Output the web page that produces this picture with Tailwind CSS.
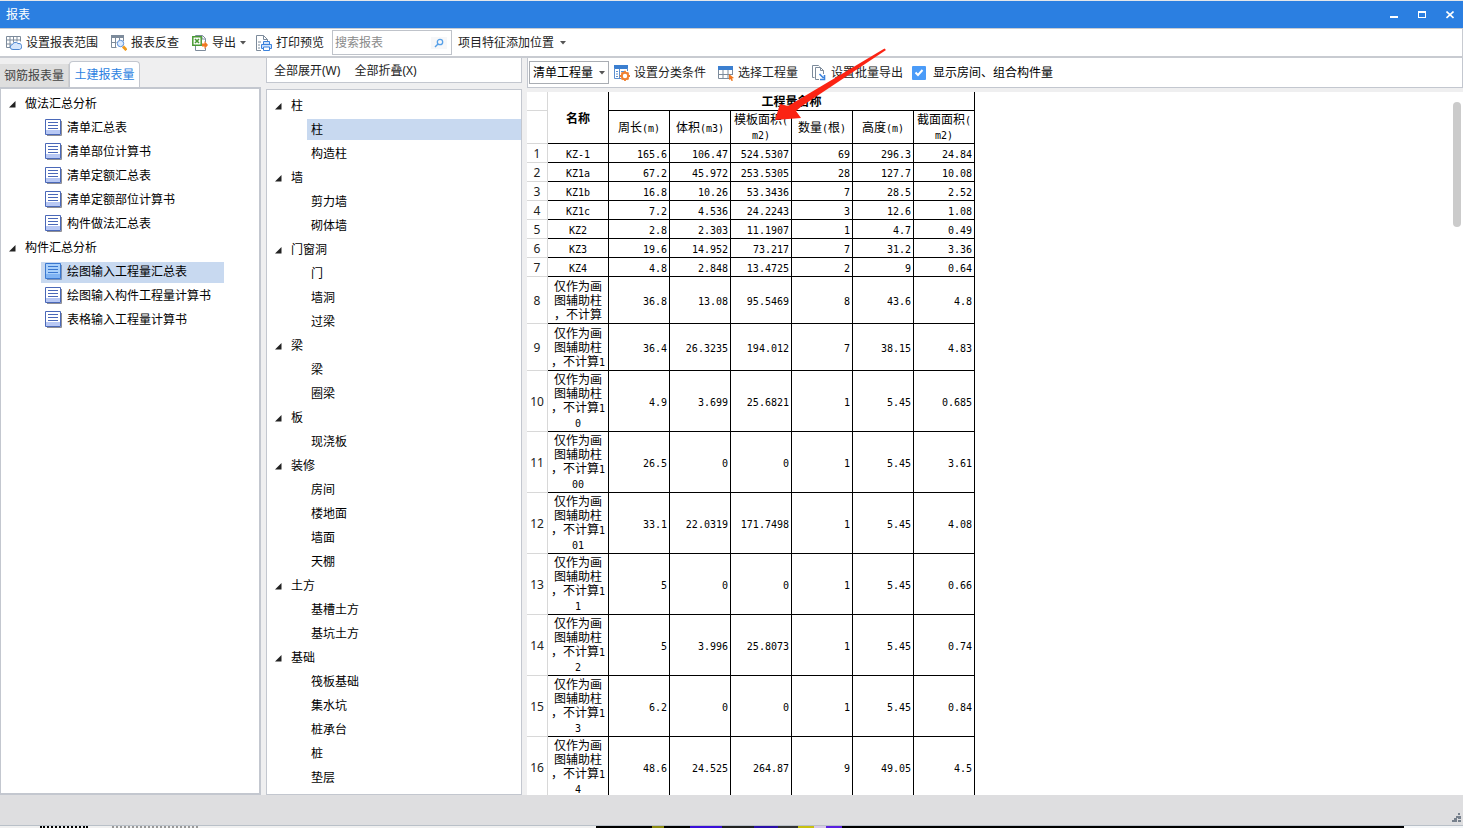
<!DOCTYPE html>
<html lang="zh-CN">
<head>
<meta charset="utf-8">
<title>报表</title>
<script src="https://cdn.jsdelivr.net/npm/@tailwindcss/browser@4"></script>
</head>
<body class="h-screen overflow-hidden flex flex-col bg-[#efeff0] text-xs text-black font-['Noto_Sans','Noto_Sans_CJK_SC',sans-serif]">
<svg class="hidden">
  <symbol id="doc" viewBox="0 0 17 17"><path d="M2 16.500h14.500V2" fill="none" stroke="#8f8f95"/><path d="M.5.5h15v15H.5z" fill="#fff" stroke="#4a68b8"/><path d="M1 11h14v4H1z" fill="#b8c8f4"/><path d="M3 3.500h10M3 6.500h10M3 9.500h10" stroke="#4a68b8"/></symbol>
  <symbol id="docsel" viewBox="0 0 17 17"><path d="M2 16.500h14.500V2" fill="none" stroke="#7d93b8"/><path d="M.5.5h15v15H.5z" fill="#a9d0fb" stroke="#3a78d0"/><path d="M1 11h14v4H1z" fill="#80b4f4"/><path d="M3 3.500h10M3 6.500h10M3 9.500h10" stroke="#3a78d0"/></symbol>
  <symbol id="tri" viewBox="0 0 7 7"><path d="M6.500 0v6.500H0z" fill="#222"/></symbol>
  <symbol id="down" viewBox="0 0 6 4"><path d="M0 0h6L3 3.500z" fill="#555"/></symbol>
</svg>

<header class="h-7 shrink-0 border-t border-[#e4e6ea] bg-[#2b7fe1] text-white flex items-center justify-between pl-1.5 pr-[9px]">
  <h1>报表</h1>
  <div class="flex items-center gap-5">
    <button aria-label="最小化"><svg class="w-2 h-2" viewBox="0 0 8 8"><path d="M0 5h8v2H0z" fill="#fff"/></svg></button>
    <button aria-label="最大化"><svg class="w-2 h-2" viewBox="0 0 8 8"><path d="M0 0h8v7H0zM1 2v4h6V2z" fill="#fff" fill-rule="evenodd"/></svg></button>
    <button aria-label="关闭"><svg class="w-2 h-2" viewBox="0 0 8 8"><path d="M.5.500l7 6.500M7.500.500l-7 6.500" stroke="#fff" stroke-width="1.600"/></svg></button>
  </div>
</header>

<nav class="h-[30px] shrink-0 bg-white border border-l-0 border-b-2 border-[#c8cbd1] flex items-center pl-1.5 text-[#222]">
  <button class="flex items-center gap-1 mr-[13px]"><svg class="w-4 h-4" viewBox="0 0 16 16" fill="none"><path d="M.5 1.500h14v5M.5 1.500v11h4M.5 5h14M.5 9h5M4 1.500v11M7.500 1.500v6M11 1.500v5" stroke="#7d8b9b"/><path d="M7 14.500a2.500 2.500 0 0 1-.5-5 3.200 3.200 0 0 1 5.500-1 3 3 0 0 1 1.500 6z" fill="#d5e6fc" stroke="#4b86d0"/></svg>设置报表范围</button>
  <button class="flex items-center gap-1 mr-[13px]"><svg class="w-4 h-4" viewBox="0 0 16 16" fill="none"><path d="M0 0h13v3H0z" fill="#7d8b9b"/><path d="M.5 1v11.500h5M12.500 3v3M.5 7.500h5M4.500 3v9M8.500 3v2" stroke="#7d8b9b"/><circle cx="9.500" cy="8.500" r="3.200" fill="#dcebff" stroke="#5b8fd8"/><path d="M12 11.500l3.500 3.500" stroke="#f09a1c" stroke-width="3"/></svg>报表反查</button>
  <button class="flex items-center gap-1 mr-2.5"><svg class="w-4 h-4" viewBox="0 0 16 16" fill="none"><path d="M3.500 2V.5h7l3 3V7M3.500 11v4.500h10V13M10 .5V4h3.500" stroke="#7d8b9b"/><path d="M.8 1.800h8.400v8.400H.8z" fill="#fff" stroke="#4a9a35" stroke-width="1.500"/><path d="M3 4l4 4M7 4l-4 4" stroke="#4a9a35" stroke-width="1.600"/><path d="M10 8.500h2.500V6L16 10l-3.500 4v-2.500H10z" fill="#f07820"/></svg>导出<svg class="w-1.5 h-1"><use href="#down"/></svg></button>
  <button class="flex items-center gap-1 mr-2"><svg class="w-4 h-4" viewBox="0 0 16 16" fill="none"><path d="M5 15.500H.5V.5h7l4 4V6M7.500.5v4h4" stroke="#7d8b9b"/><path d="M2 7h3M2 10h2M2 13h2" stroke="#7d8b9b"/><path d="M7.500 9V6.500h6V9M5.500 9.500h10v4h-10z" stroke="#3b82dc" fill="#cfe2fb"/><path d="M7.500 12h6v3.500h-6z" fill="#fff" stroke="#3b82dc"/></svg>打印预览</button>
  <label class="h-[25px] w-[120px] border border-[#bfc3ca] flex items-center justify-between pl-0.5 pr-1 bg-white"><input class="w-[90px] placeholder:text-[#8a8a8a] outline-none" placeholder="搜索报表" aria-label="搜索报表"><svg class="w-4 h-3 bg-[#f6f7f9]" viewBox="0 0 16 12" fill="none"><circle cx="9" cy="5" r="2.700" stroke="#56a0e8" stroke-width="1.300"/><path d="M7 7l-3 3" stroke="#56a0e8" stroke-width="1.500"/></svg></label>
  <button class="flex items-center gap-1.5 ml-1.5">项目特征添加位置<svg class="w-1.5 h-1"><use href="#down"/></svg></button>
</nav>

<main class="flex-1 min-h-0 flex">
  <section class="w-[261px] shrink-0 flex flex-col">
    <div class="h-[29px] shrink-0 flex items-end">
      <button class="h-[23px] w-[69px] bg-[#dedede] border-r border-[#cfcfcf] text-[#444]">钢筋报表量</button>
      <button class="h-[26px] w-[71px] rounded-t border border-b-0 border-[#c3c7cf] bg-white text-[#2b7fe1]">土建报表量</button>
    </div>
    <div id="left" class="flex-1 min-h-0 bg-white border-2 border-l border-[#c3c7cf] pt-[3px]"></div>
  </section>
  <section class="w-64 shrink-0 ml-[5px] flex flex-col">
    <div class="h-[25px] shrink-0 border border-t-0 border-[#c3c7cf] bg-white flex items-center gap-3.5 px-[7px] pt-0.5 text-[#222]"><button>全部展开(W)</button><button>全部折叠(X)</button></div>
    <div id="mid" class="flex-1 min-h-0 overflow-hidden mt-1.5 bg-white border border-[#c3c7cf] pt-[3px]"></div>
  </section>
  <section class="flex-1 min-w-0 ml-[5px] flex flex-col">
    <div class="h-[30px] shrink-0 border border-t-0 border-[#c3c7cf] bg-white flex items-center pl-px text-[#222]">
      <div class="relative flex items-center"><select aria-label="工程量类型" class="appearance-none h-[23px] w-20 pl-[3px] border border-[#a9adb3] bg-white text-black"><option>清单工程量</option></select><svg class="absolute right-1 w-1.5 h-1 pointer-events-none"><use href="#down"/></svg></div>
      <button class="flex items-center gap-1 ml-[5px] mr-3"><svg class="w-4 h-4" viewBox="0 0 16 16" fill="none"><path d="M0 0h14v4H0z" fill="#3b7fd0"/><path d="M.5 3v10.500H7M13.500 3v3M5.500 4v9M2 6.500h2M2 9h2M2 11.500h2M7 6.500h4" stroke="#5b8fd0"/><circle cx="11" cy="11" r="3.200" fill="#fff" stroke="#f08030" stroke-width="2"/><path d="M11 5.800v2M11 14v2M5.800 11h2M14 11h2M7.500 7.500l1 1M13.500 13.500l1 1M14.500 7.500l-1 1M8.500 13.500l-1 1" stroke="#f08030" stroke-width="1.800"/></svg>设置分类条件</button>
      <button class="flex items-center gap-1 mr-[13px]"><svg class="w-4 h-4" viewBox="0 0 16 16" fill="none"><path d="M0 1h15v4H0z" fill="#3b7fd0"/><path d="M.5 5v8.500H12M14.500 5v5M0 9.500h14M5 5v8.500M10 5v8.500" stroke="#7d8b9b"/><path d="M11 9l5 4-2 .5 1 2-1.500.5-1-2L11 15z" fill="#f07820"/></svg>选择工程量</button>
      <button class="flex items-center gap-1 mr-[9px]"><svg class="w-4 h-4" viewBox="0 0 16 16" fill="none"><path d="M3.500 12.500H1.500V.5h6l1 1M8 14.500H4.500v-12h5l3 3V9M9.500 2.500v3h3" stroke="#7d8b9b"/><path d="M8.500 9l4 4M13.500 10v4.500H9" stroke="#3b82dc" stroke-width="1.600"/></svg>设置批量导出</button>
      <label class="flex items-center gap-[7px] text-black"><span class="relative grid w-3.5 h-3.5"><input type="checkbox" checked class="appearance-none w-3.5 h-3.5 bg-[#4a9bf8] rounded-[1px]"><svg class="absolute inset-0 w-3.5 h-3.5 pointer-events-none" viewBox="0 0 14 14"><path d="M3.500 6.500L6 9l4.500-5" fill="none" stroke="#fff" stroke-width="2"/></svg></span>显示房间、组合构件量</label>
    </div>
    <div class="flex-1 min-h-0 overflow-hidden mt-1 bg-white flex items-start justify-between">
      <table class="table-fixed w-[448px] border-separate border-spacing-0">
        <colgroup><col class="w-[21px]"><col class="w-[61px]"><col class="w-[61px]"><col class="w-[61px]"><col class="w-[61px]"><col class="w-[61px]"><col class="w-[61px]"><col class="w-[61px]"></colgroup>
        <thead id="head"></thead>
        <tbody id="rows"></tbody>
      </table>
      <div class="w-2 h-[75px] min-h-[75px] mt-2.5 mr-0.5 rounded-full bg-[#cbcbcb] pb-[50px] box-content"></div>
    </div>
  </section>
</main>

<footer class="h-[31px] shrink-0 bg-[#dedee0] border-b border-[#b9c0c8] flex items-end justify-end pr-0.5 pb-0.5"><svg class="w-2.5 h-2.5" viewBox="0 0 10 10"><path d="M7 0h2v2H7zM5 3h2v2H5zM7 3h3v3H7zM1 7h2v2H1zM3 5h3v4H3zM7 7h3v2H7z" fill="#77808c"/></svg></footer>
<div class="h-0.5 shrink-0 flex bg-[#f0f0f0]">
  <div class="w-[40px]"></div><div class="w-12 border-b-2 border-dotted border-black"></div><div class="w-6"></div><div class="w-[86px] border-b-2 border-dotted border-[#999]"></div>
  <div class="w-[398px]"></div>
  <div class="flex-1 bg-black flex"><div class="w-14"></div><div class="w-3 bg-[#8c8a10]"></div><div class="w-[26px]"></div><div class="w-8 bg-[#3a0fd8]"></div><div class="w-8 bg-[#222]"></div><div class="w-6 bg-[#2a0fa8]"></div><div class="w-5 bg-[#333]"></div><div class="w-4 bg-[#c8c010]"></div><div class="w-3 bg-[#d8c8e8]"></div><div class="w-4 bg-[#5a20e0]"></div></div>
  <div class="w-[59px] bg-[#f4f6f8]"></div>
</div>

<svg class="absolute left-[770px] top-[46px] w-[120px] h-[80px] pointer-events-none" viewBox="770 46 120 80"><path d="M884.500 48.500L788 106l-8-2L775 120l26-2-5-7 6-5 84-56z" fill="#fb2313"/></svg>

<script>
const icon = n => `<svg class="w-[17px] h-[17px] mb-0.5 shrink-0"><use href="#${n}"/></svg>`;
const tri = '<svg class="w-[7px] h-[7px] mr-2 shrink-0"><use href="#tri"/></svg>';
const left = [['做法汇总分析', '清单汇总表', '清单部位计算书', '清单定额汇总表', '清单定额部位计算书', '构件做法汇总表'], ['构件汇总分析', '绘图输入工程量汇总表', '绘图输入构件工程量计算书', '表格输入工程量计算书']];
document.getElementById('left').innerHTML = left.map(([g, ...c]) =>
  `<div class="h-6 flex items-center pl-2">${tri}<span class="pl-px">${g}</span></div>` + c.map(t => t === '绘图输入工程量汇总表'
    ? `<div class="h-6 flex items-center pl-10"><div class="h-[21px] w-[183px] bg-[#c8d9f0] flex items-center gap-[5px] pl-1">${icon('docsel')}${t}</div></div>`
    : `<div class="h-6 flex items-center gap-[5px] pl-11">${icon('doc')}${t}</div>`).join('')).join('');
const mid = [['柱', '柱', '构造柱'], ['墙', '剪力墙', '砌体墙'], ['门窗洞', '门', '墙洞', '过梁'], ['梁', '梁', '圈梁'], ['板', '现浇板'], ['装修', '房间', '楼地面', '墙面', '天棚'], ['土方', '基槽土方', '基坑土方'], ['基础', '筏板基础', '集水坑', '桩承台', '桩', '垫层']];
document.getElementById('mid').innerHTML = mid.map(([g, ...c]) =>
  `<div class="h-6 flex items-center pl-2 pt-0.5">${tri}<span class="pl-px">${g}</span></div>` + c.map(t => t === '柱'
    ? `<div class="h-6 flex items-center pl-10"><div class="h-[21px] flex-1 bg-[#c8d9f0] flex items-center pl-1 pt-0.5">${t}</div></div>`
    : `<div class="h-6 flex items-center pl-11 pt-0.5">${t}</div>`).join('')).join('');

const latin = s => s.replace(/[A-Za-z0-9().\-]+/g, m => `<span class="font-['DejaVu_Sans_Mono',monospace] text-[10px]">${m}</span>`);
const blank = '<td class="border-r border-b border-[#d8d8d8]"></td>';
document.getElementById('head').innerHTML =
  `<tr class="h-[19px]">${blank}<th rowspan="2" class="border-r border-b border-black font-bold pt-0.5">名称</th><th colspan="6" class="border-r border-b border-black font-bold leading-[14px] pt-0.5">工程量名称</th></tr>` +
  `<tr class="h-[33px]">${blank}` + ['周长(m)', '体积(m3)', '模板面积(<br>m2)', '数量(根)', '高度(m)', '截面面积(<br>m2)'].map(h =>
    `<th class="border-r border-b border-black leading-[14px] font-normal whitespace-nowrap pt-0.5">${h.split('<br>').map(latin).join('<br>')}</th>`).join('') + '</tr>';
const long = s => '仅作为画\n图辅助柱\n，不计算' + s;
const data = [
  ['KZ-1', '165.6', '106.47', '524.5307', '69', '296.3', '24.84'],
  ['KZ1a', '67.2', '45.972', '253.5305', '28', '127.7', '10.08'],
  ['KZ1b', '16.8', '10.26', '53.3436', '7', '28.5', '2.52'],
  ['KZ1c', '7.2', '4.536', '24.2243', '3', '12.6', '1.08'],
  ['KZ2', '2.8', '2.303', '11.1907', '1', '4.7', '0.49'],
  ['KZ3', '19.6', '14.952', '73.217', '7', '31.2', '3.36'],
  ['KZ4', '4.8', '2.848', '13.4725', '2', '9', '0.64'],
  [long(''), '36.8', '13.08', '95.5469', '8', '43.6', '4.8'],
  [long('1'), '36.4', '26.3235', '194.012', '7', '38.15', '4.83'],
  [long('1\n0'), '4.9', '3.699', '25.6821', '1', '5.45', '0.685'],
  [long('1\n00'), '26.5', '0', '0', '1', '5.45', '3.61'],
  [long('1\n01'), '33.1', '22.0319', '171.7498', '1', '5.45', '4.08'],
  [long('1\n1'), '5', '0', '0', '1', '5.45', '0.66'],
  [long('1\n2'), '5', '3.996', '25.8073', '1', '5.45', '0.74'],
  [long('1\n3'), '6.2', '0', '0', '1', '5.45', '0.84'],
  [long('1\n4'), '48.6', '24.525', '264.87', '9', '49.05', '4.5']];
document.getElementById('rows').innerHTML = data.map(([n, ...v], i) => {
  const h = i < 7 ? 'h-[19px]' : i < 9 ? 'h-[47px]' : 'h-[61px]';
  return `<tr class="${h}"><td class="border-r border-b border-[#d8d8d8] text-center leading-[14px] text-[#222] pt-0.5">${i + 1}</td>` +
    `<td class="border-r border-b border-black text-center leading-[14px] whitespace-nowrap pt-0.5">${n.split('\n').map(latin).join('<br>')}</td>` +
    v.map(x => `<td class="border-r border-b border-black text-right pr-0.5 pt-[3px] leading-[14px] font-['DejaVu_Sans_Mono',monospace] text-[10px]">${x}</td>`).join('') + '</tr>';
}).join('');
</script>
</body>
</html>
